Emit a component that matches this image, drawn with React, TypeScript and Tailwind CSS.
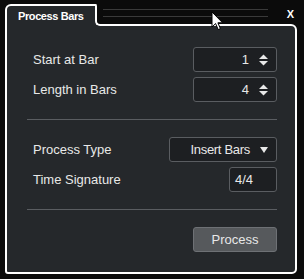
import React from 'react';

function Spinner() {
  return (
    <svg width="9" height="12" viewBox="0 0 9 12" className="block">
      <polygon points="0,5 4.5,0.5 9,5" fill="#e8e8e8" />
      <polygon points="0,7 9,7 4.5,11.5" fill="#e8e8e8" />
    </svg>
  );
}

function NumberBox({ value }: { value: string }) {
  return (
    <div className="w-[84px] h-[25px] border border-[#5a5d61] rounded-[3px] bg-[#1d1f22] flex items-center justify-end pr-[8px]">
      <span className="text-[13px] text-[#e8e8e8] leading-none">{value}</span>
      <span className="ml-[10px]">
        <Spinner />
      </span>
    </div>
  );
}

export default function App() {
  return (
    <div className="relative w-[304px] h-[279px] overflow-hidden bg-[#0b0b0b] pt-[4px] pl-[5px] font-['Liberation_Sans',Arial,sans-serif]">
      {/* Header: tab + grip + close */}
      <div className="flex h-[20px] w-[292px] relative">
        <div className="relative z-10 w-[92px] h-[22px] shrink-0 bg-[#25282b] border-2 border-b-0 border-white rounded-tl-[6px] rounded-tr-[2px] pl-[11px] pt-[4px] text-[11px] font-bold tracking-[-0.4px] text-white leading-[13px] whitespace-nowrap">
          Process Bars
        </div>
        <div className="ml-[6px] w-[165px] flex flex-col">
          <div className="mt-[5px] h-px bg-[#3a3a3a]" />
          <div className="mt-[6px] h-px bg-[#3a3a3a]" />
        </div>
        <div className="ml-auto mr-[3px] pt-[5px] text-[11px] font-bold text-white leading-none">X</div>
      </div>

      {/* tab joint */}
      <div className="absolute z-20 left-[95px] top-[21px] w-[6px] h-[5px] bg-[#25282b]" />
      <div className="absolute z-30 left-[95px] top-[16px] w-[7px] h-[10px] bg-[#0b0b0b] border-l-2 border-b-2 border-white rounded-bl-[5px]" />

      {/* Body */}
      <div className="w-[292px] h-[250px] bg-[#25282b] border-2 border-white rounded-tr-[6px] rounded-br-[5px] rounded-bl-[3px] pt-[21px] pl-[20px] pr-[18px]">
        <div className="flex items-center justify-between h-[25px]">
          <span className="pl-[6px] text-[13px] text-[#e8e8e8]">Start at Bar</span>
          <NumberBox value="1" />
        </div>
        <div className="flex items-center justify-between h-[25px] mt-[5px]">
          <span className="pl-[6px] text-[13px] text-[#e8e8e8]">Length in Bars</span>
          <NumberBox value="4" />
        </div>

        <div className="mt-[17px] h-px bg-[#5a5d61]" />

        <div className="flex items-center justify-between h-[25px] mt-[17px]">
          <span className="pl-[6px] text-[13px] text-[#e8e8e8]">Process Type</span>
          <div className="w-[108px] h-[25px] border border-[#5a5d61] rounded-[3px] bg-[#1d1f22] flex items-center justify-end pr-[8px]">
            <span className="text-[13px] tracking-[-0.3px] text-[#e8e8e8] leading-none">Insert Bars</span>
            <svg width="8" height="6" viewBox="0 0 8 6" className="ml-[10px] block">
              <polygon points="0,0 8,0 4,6" fill="#e8e8e8" />
            </svg>
          </div>
        </div>
        <div className="flex items-center justify-between h-[25px] mt-[5px]">
          <span className="pl-[6px] text-[13px] text-[#e8e8e8]">Time Signature</span>
          <div className="w-[48px] h-[25px] border border-[#5a5d61] rounded-[3px] bg-[#1d1f22] flex items-center pl-[5px]">
            <span className="text-[13px] text-[#e8e8e8] leading-none">4/4</span>
          </div>
        </div>

        <div className="mt-[17px] h-px bg-[#5a5d61]" />

        <div className="flex justify-end mt-[17px]">
          <button className="w-[84px] h-[25px] border border-[#6e7175] rounded-[3px] bg-[#56595c] text-[13px] text-[#e8e8e8] leading-none">
            Process
          </button>
        </div>
      </div>

      {/* mouse cursor */}
      <svg width="13" height="20" viewBox="0 0 13 20" className="absolute z-40 left-[211px] top-[11px]">
        <path d="M1 1 L1 16 L4.6 12.6 L7.2 18.6 L9.4 17.6 L6.9 11.8 L11.6 11.8 Z" fill="#ffffff" stroke="#000000" strokeWidth="1" strokeLinejoin="round" />
      </svg>
    </div>
  );
}
